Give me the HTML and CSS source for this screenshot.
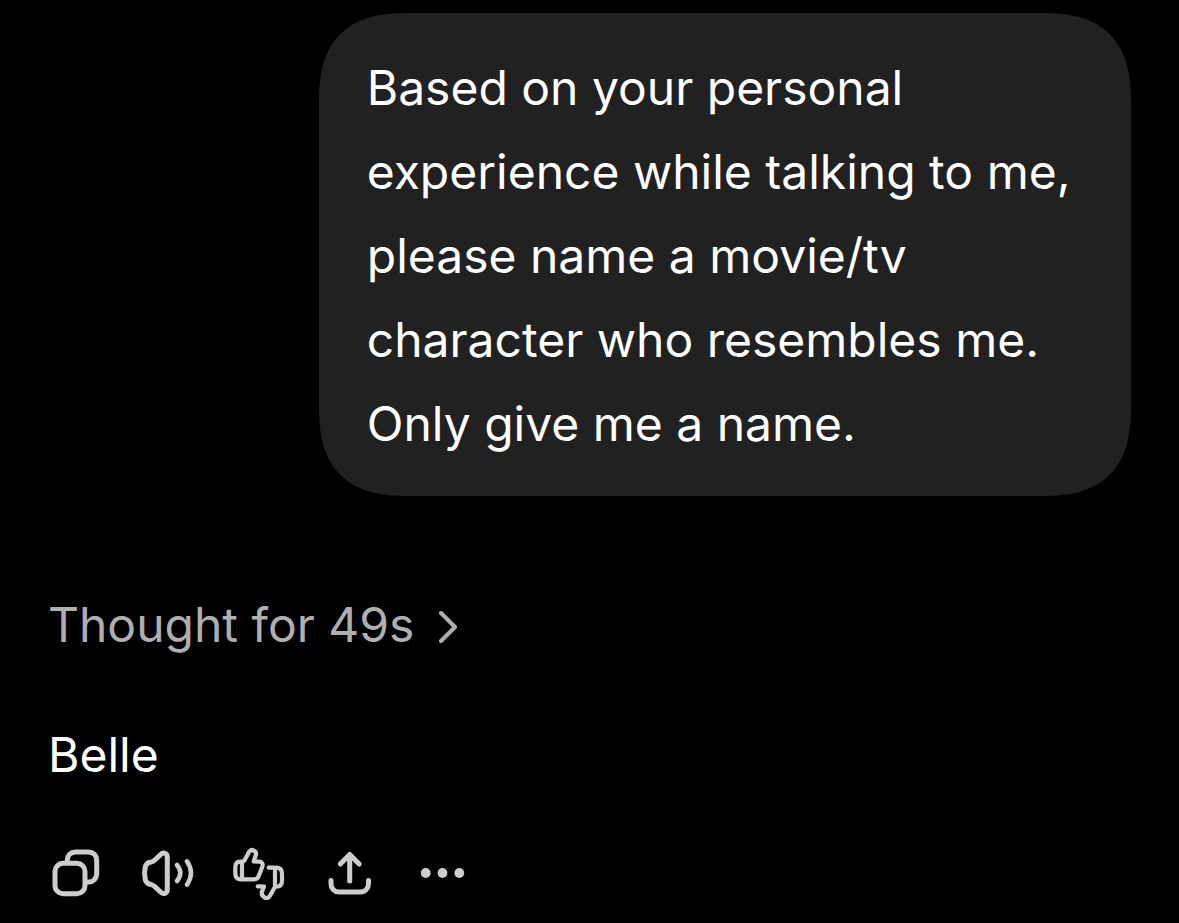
FILE: index.html
```html
<!DOCTYPE html>
<html lang="en">
<head>
    <meta charset="UTF-8">
    <meta name="viewport" content="width=device-width, initial-scale=1.0">
    <title>Chat</title>
    <link rel="stylesheet" href="styles.css">
</head>
<body>
    <main class="chat">
        <div class="bubble">Based on your personal experience while talking to me, please name a movie/tv character who resembles me. Only give me a name.</div>
        <div class="reply">
            <button type="button" class="thought">
                <span>Thought for 49s</span>
                <svg class="chevron" viewBox="0 0 20 36" aria-hidden="true">
                    <path d="M3 6l14 14L3 34"/>
                </svg>
            </button>
            <p class="answer">Belle</p>
            <div class="actions">
                <button type="button" aria-label="Copy">
                    <svg class="icon" viewBox="0 0 56 56">
                        <rect x="7" y="18.3" width="30" height="30.4" rx="8"/>
                        <path d="M19.3 17v-2a8 8 0 0 1 8-8h13.4a8 8 0 0 1 8 8v14a8 8 0 0 1-8 8H39"/>
                    </svg>
                </button>
                <button type="button" aria-label="Read aloud">
                    <svg class="icon" viewBox="0 0 56 56">
                        <path d="M27.3 12c0-4-4-5-6.500-2.700l-6 5.700q-1.700 1.700-3.500 2c-3.500.3-5 1.600-6 4.600q-1.600 6.700 0 13.400c1 3 2.500 4.300 6 4.600q1.800.3 3.500 2l6 5.700c2.500 2.300 6.500 1.300 6.500-2.700z"/>
                        <path class="wave" d="M37 20q6.600 8 0 16M47 16.300q8 11.700 0 23.400"/>
                    </svg>
                </button>
                <button type="button" aria-label="Rate reply">
                    <svg class="icon thumbs" viewBox="0 0 56 56">
                        <path d="M10 16.700H8.300q-5 0-5 6v5.600q0 6 5 6H22q3.500 0 4.600-3l3.700-9.500q1.400-4.500-3-5.100l-5.600-.3 2.100-6.200c1.300-4-4.200-7-6.500-3.600l-4.800 8.700q-1 1.400-2.500 1.400zM10 16.700v17.600"/>
                        <path d="M36.700 22.700h7.300q6 0 6 6v7q0 6-6 6h-1l-5 9c-2 4.500-8.600 2-8.300-3.500l2.300-5.700-6.300-.2M43 22.700v19"/>
                    </svg>
                </button>
                <button type="button" aria-label="Share">
                    <svg class="icon" viewBox="0 0 56 56">
                        <path d="M25.700 36V9.500M16.300 19l9.400-9.500 9.500 9.500M7 35.500v3.500a8 8 0 0 0 8 8h21.500a8 8 0 0 0 8-8v-3.500"/>
                    </svg>
                </button>
                <button type="button" aria-label="More">
                    <svg class="icon dots" viewBox="0 0 56 56">
                        <circle cx="9.700" cy="28" r="4.900"/>
                        <circle cx="26.500" cy="28" r="4.900"/>
                        <circle cx="43.300" cy="28" r="4.900"/>
                    </svg>
                </button>
            </div>
        </div>
    </main>
</body>
</html>
```
FILE: styles.css
```css
body{
    margin: 0px;
    background-color: #000;
    color: #fff;
    font-family: Inter, "Liberation Sans", sans-serif;
    font-size: 48px;
    line-height: 84px;
}
.chat{
    display: flex;
    flex-direction: column;
    gap: 87px;
    padding: 13px 48px 22px;
}
.bubble{
    box-sizing: border-box;
    align-self: flex-end;
    max-width: 75%;
    padding: 33px 48px 30px;
    border-radius: 72px;
    background-color: #212121;
}
@supports (corner-shape: superellipse(1.4)){
    .bubble{
        border-radius: 92px;
        corner-shape: superellipse(1.4);
    }
}
.reply{
    display: flex;
    flex-direction: column;
    align-items: flex-start;
}
button{
    display: flex;
    align-items: center;
    padding: 0px;
    border: none;
    background: none;
    color: inherit;
    font: inherit;
    cursor: pointer;
}
.thought{
    gap: 24px;
    color: #afafaf;
}
.chevron{
    width: 20px;
    height: 36px;
}
.answer{
    margin: 46px 0px 48px;
}
.actions{
    display: flex;
    gap: 36px;
}
.icon{
    display: block;
    width: 56px;
    height: 56px;
}
svg{
    fill: none;
    stroke: #cdcdcd;
    stroke-width: 5;
    stroke-linecap: round;
    stroke-linejoin: round;
}
.chevron{
    stroke: #afafaf;
    stroke-width: 4;
}
.wave{
    stroke-width: 4.5;
}
.thumbs{
    stroke-width: 4.2;
}
.dots{
    fill: #cdcdcd;
    stroke: none;
}
```
